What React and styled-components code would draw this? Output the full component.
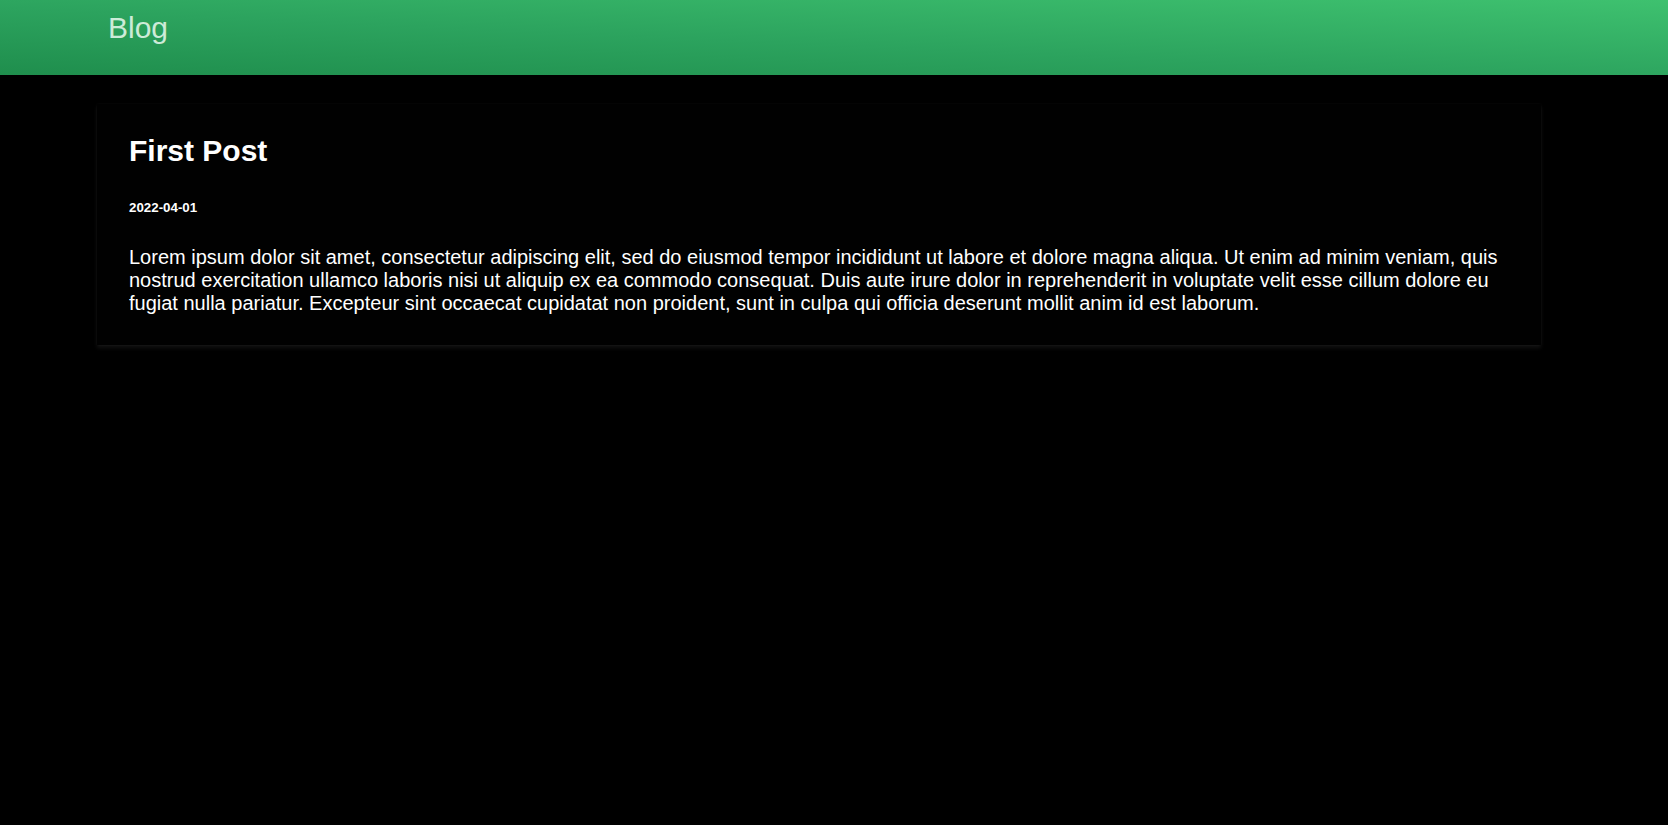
import React from 'react';
import styled, { createGlobalStyle } from 'styled-components';

const GlobalStyle = createGlobalStyle`
  html, body {
    margin: 0;
    padding: 0;
    background: #000;
    font-family: "Liberation Sans", Arial, sans-serif;
  }
`

const Header = styled.header`
  height: 75px;
  box-sizing: border-box;
  padding: 11px 0 0 108px;
  background: linear-gradient(to top right, #1f8e4d 0%, #2ca35e 45%, #3ec16f 100%);

  & > a {
    color: rgba(235, 250, 240, 0.85);
    font-size: 30px;
    text-decoration: none;
  }
`

const Main = styled.main`
  padding: 29px 127px 40px 97px;
`

const Card = styled.article`
  background: #010101;
  padding: 30px 32px 30px;
  box-shadow: 0 3px 4px rgba(255, 255, 255, 0.07), 0 0 2px rgba(255, 255, 255, 0.05);

  h1 {
    margin: 0;
    color: #fff;
    font-size: 30px;
    font-weight: bold;
  }

  .date {
    display: block;
    margin-top: 32px;
    color: #fff;
    font-size: 13.33px;
    font-weight: bold;
  }

  p {
    margin: 31px 0 0;
    color: #fff;
    font-size: 20px;
    line-height: 23px;
  }
`

const posts = [
  {
    id: 1,
    title: 'First Post',
    date: '2022-04-01',
    body: 'Lorem ipsum dolor sit amet, consectetur adipiscing elit, sed do eiusmod tempor incididunt ut labore et dolore magna aliqua. Ut enim ad minim veniam, quis nostrud exercitation ullamco laboris nisi ut aliquip ex ea commodo consequat. Duis aute irure dolor in reprehenderit in voluptate velit esse cillum dolore eu fugiat nulla pariatur. Excepteur sint occaecat cupidatat non proident, sunt in culpa qui officia deserunt mollit anim id est laborum.',
  },
];

function App() {
  return (
    <>
      <GlobalStyle />
      <Header>
        <a href="#">Blog</a>
      </Header>
      <Main>
        {posts.map((post) => (
          <Card key={post.id}>
            <h1>{post.title}</h1>
            <span className='date'>{post.date}</span>
            <p>{post.body}</p>
          </Card>
        ))}
      </Main>
    </>
  )
}

export default App;
